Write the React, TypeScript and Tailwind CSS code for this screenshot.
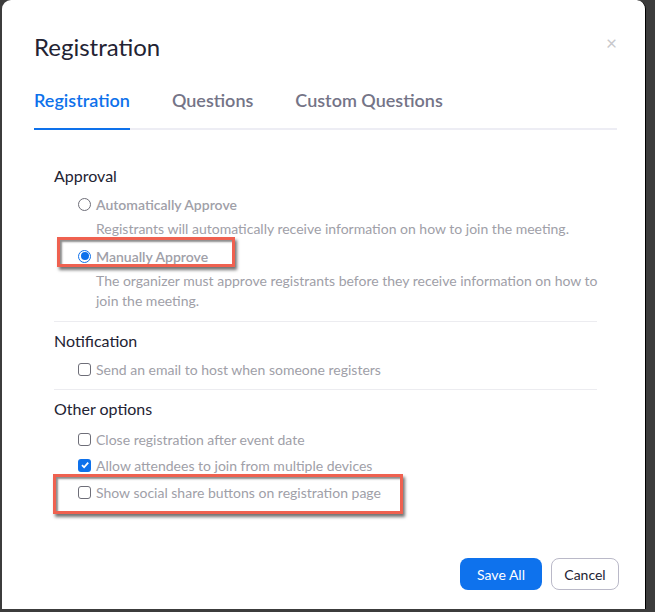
import React from "react";

const font = { fontFamily: "Lato, 'Open Sans', 'Liberation Sans', sans-serif" };

function Radio({ checked }: { checked?: boolean }) {
  return (
    <span
      className={`inline-flex items-center justify-center w-[13px] h-[13px] rounded-full border shrink-0 ${
        checked ? "border-[#0e71eb]" : "border-[#6e6e78]"
      }`}
    >
      {checked && <span className="w-[8px] h-[8px] rounded-full bg-[#0e71eb]" />}
    </span>
  );
}

function Check({ checked }: { checked?: boolean }) {
  if (checked)
    return (
      <span className="inline-flex items-center justify-center w-[13px] h-[13px] rounded-[3px] bg-[#0e71eb] shrink-0">
        <svg width="10" height="10" viewBox="0 0 10 10">
          <path d="M2 5.2 L4.1 7.3 L8.2 2.6" fill="none" stroke="#fff" strokeWidth="1.8" />
        </svg>
      </span>
    );
  return <span className="inline-block w-[13px] h-[13px] rounded-[3px] border border-[#6e6e78] bg-white shrink-0" />;
}

function Highlight({ className }: { className: string }) {
  return (
    <div
      className={`absolute border-[3px] border-[#ef6150] shadow-[2px_3px_3px_rgba(0,0,0,0.55),inset_2px_2px_2px_rgba(0,0,0,0.45)] pointer-events-none ${className}`}
    />
  );
}

function Divider() {
  return <div className="h-px bg-[#ececf0] ml-[52px] mr-[48px]" />;
}

export default function App() {
  return (
    <div className="w-[655px] h-[612px] bg-[#3c3c3c] overflow-hidden" style={font}>
      <div className="relative ml-[2px] w-[644px] h-[609px] bg-white rounded-t-[9px] border-r border-black">
        <div className="flex items-center justify-between pl-[32px] pr-[28px] pt-[32px]">
          <h2 className="text-[24px] leading-[30px] text-[#232333]">Registration</h2>
          <span className="text-[19px] text-[#c8c8cc] leading-none mt-[-9px]">×</span>
        </div>

        <div className="ml-[32px] mr-[28px] mt-[26px] flex border-b-[2px] border-[#ededf4] text-[18px] leading-[24px] font-semibold">
          <div className="pb-[16px] -mb-[2px] border-b-[2px] border-[#0e71eb] text-[#0e71eb]">Registration</div>
          <div className="pb-[16px] ml-[42px] text-[#747487]">Questions</div>
          <div className="pb-[16px] ml-[42px] text-[#747487]">Custom Questions</div>
        </div>

        <div className="pt-[36px]">
          <div className="px-[52px] text-[16px] leading-[20px] text-[#232333]">Approval</div>
          <div className="pl-[76px] mt-[8px] text-[14px] text-[#a0a0a8]">
            <div className="flex items-center gap-[5px] h-[20px] font-semibold">
              <Radio /> <span>Automatically Approve</span>
            </div>
            <div className="pl-[18px] mt-[5px] leading-[20px]">
              Registrants will automatically receive information on how to join the meeting.
            </div>
            <div className="relative flex items-center gap-[5px] h-[20px] mt-[7px] font-semibold">
              <Radio checked /> <span>Manually Approve</span>
              <Highlight className="left-[-21px] top-[-9px] w-[178px] h-[30px]" />
            </div>
            <div className="pl-[18px] mt-[5px] leading-[20px] w-[530px]">
              The organizer must approve registrants before they receive information on how to join the meeting.
            </div>
          </div>

          <div className="mt-[10px]">
            <Divider />
          </div>

          <div className="px-[52px] mt-[9px] text-[16px] leading-[20px] text-[#232333]">Notification</div>
          <div className="pl-[76px] mt-[8px] text-[14px] text-[#a0a0a8]">
            <div className="flex items-center gap-[5px] h-[20px]">
              <Check /> <span>Send an email to host when someone registers</span>
            </div>
          </div>

          <div className="mt-[10px]">
            <Divider />
          </div>

          <div className="px-[52px] mt-[9px] text-[16px] leading-[20px] text-[#232333]">Other options</div>
          <div className="pl-[76px] mt-[10px] text-[14px] text-[#a0a0a8]">
            <div className="flex items-center gap-[5px] h-[20px]">
              <Check /> <span>Close registration after event date</span>
            </div>
            <div className="flex items-center gap-[5px] h-[20px] mt-[6px]">
              <Check checked /> <span>Allow attendees to join from multiple devices</span>
            </div>
            <div className="relative flex items-center gap-[5px] h-[20px] mt-[7px]">
              <Check /> <span>Show social share buttons on registration page</span>
              <Highlight className="left-[-25px] top-[-8px] w-[350px] h-[40px]" />
            </div>
          </div>
        </div>

        <div className="absolute right-[26px] bottom-[19px] flex gap-[9px] text-[14px]">
          <button className="w-[82px] h-[32px] rounded-[8px] bg-[#0e72ed] text-white">Save All</button>
          <button className="w-[68px] h-[32px] rounded-[8px] border border-[#bab9c8] text-[#232333] bg-white">
            Cancel
          </button>
        </div>
      </div>
    </div>
  );
}
